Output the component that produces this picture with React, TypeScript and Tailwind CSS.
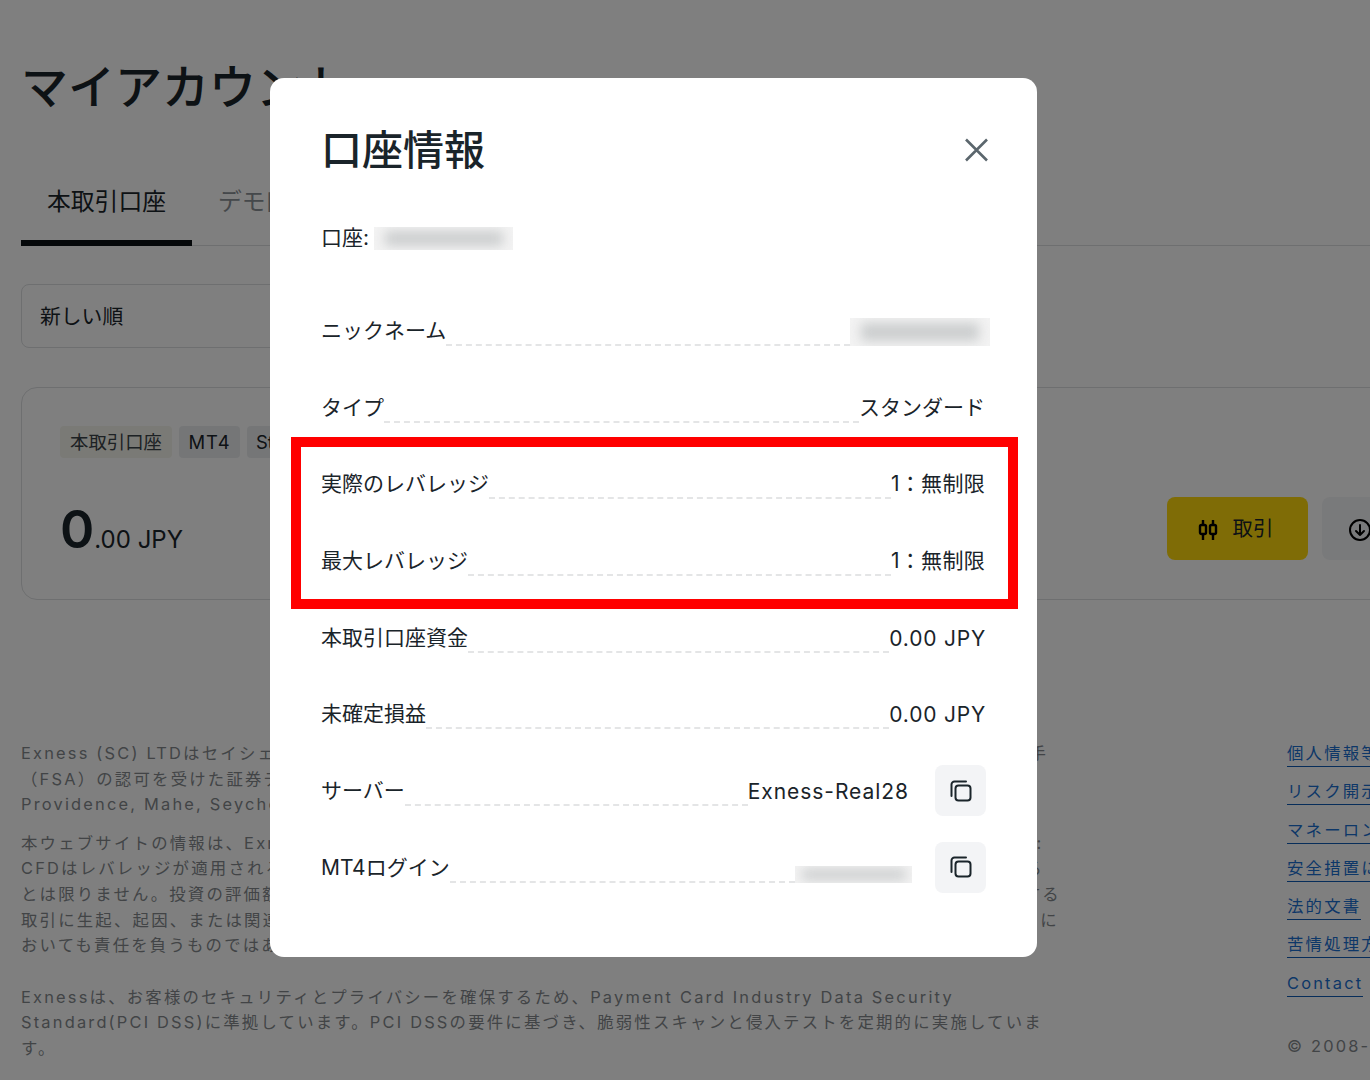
const FF = "font-['Inter','Noto_Sans_CJK_JP',sans-serif]";

function CopyIcon() {
  return (
    <svg width="24" height="24" viewBox="0 0 24 24" fill="none" stroke="#1a242a" strokeWidth="2" strokeLinecap="round" strokeLinejoin="round">
      <rect x="6.5" y="6.5" width="15" height="15" rx="3" />
      <path d="M17 2.5H5.5a3 3 0 0 0-3 3V17" />
    </svg>
  );
}

function Blur({ w, h, bar, extra = "" }: { w: string; h: string; bar: string; extra?: string }) {
  return (
    <div className={`${w} ${h} ${extra} bg-[#f3f3f3] overflow-hidden flex items-center justify-center shrink-0`}>
      <div className={`${bar} bg-[#cbcdce] blur-[6px]`} />
    </div>
  );
}

function Row({ label, value, right, cls = "" }: { label: string; value?: string; right?: React.ReactNode; cls?: string }) {
  return (
    <div className="flex items-start h-[51px]">
      <div className="h-[51px] leading-[51px] text-[21px] shrink-0">{label}</div>
      <div className="flex-1 h-[41px] border-b-2 border-dashed border-[#e4e5e6]" />
      {value && <div className={`h-[51px] leading-[51px] text-[21px] shrink-0 ${cls}`}>{value}</div>}
      {right}
    </div>
  );
}

function CopyButton() {
  return (
    <div className="w-[51px] h-[51px] -mr-px bg-[#f3f4f6] rounded-[8px] flex items-center justify-center shrink-0">
      <CopyIcon />
    </div>
  );
}

const p1 = [
  "Exness (SC) LTDはセイシェル共和国で登録された証券ディーラーで、登録番号は8423606-1、セイシェル証券取引相手",
  "（FSA）の認可を受けた証券ディーラーで、ライセンス番号はSD025です。登記上の事務所はCT House,",
  "Providence, Mahe, Seychellesです。",
];
const p2 = [
  "本ウェブサイトの情報は、Exness (SC) LTDによる一般的な情報提供を目的としたものであり、投資助言ではありません:",
  "CFDはレバレッジが適用されるため、複雑な金融商品であり、取引には高いリスクが伴います。お客様の資金を失いもする",
  "とは限りません。投資の評価額は上下する可能性があり、投資した金額を下回る場合があることをご理解いただくよう要する",
  "取引に生起、起因、または関連する損失や損害について、当社はいかなる場合においても一切の責任を負いませんいかなるに",
  "おいても責任を負うものではありません。",
];
const p3 = [
  "Exnessは、お客様のセキュリティとプライバシーを確保するため、Payment Card Industry Data Security",
  "Standard(PCI DSS)に準拠しています。PCI DSSの要件に基づき、脆弱性スキャンと侵入テストを定期的に実施していま",
  "す。",
];
const links = ["個人情報等の取扱い", "リスク開示に関する", "マネーロンダリング", "安全措置について", "法的文書", "苦情処理方針", "Contact"];

function Lines({ lines, cls }: { lines: string[]; cls: string }) {
  return (
    <div className={cls}>
      {lines.map((l) => (
        <div key={l} className="whitespace-nowrap h-[25.6px] leading-[25.6px]">{l}</div>
      ))}
    </div>
  );
}

export default function App() {
  return (
    <div className={`relative w-[1370px] h-[1080px] overflow-hidden bg-white text-[#1a242a] ${FF}`}>
      <div className="w-[1500px] pl-[21px] pt-[60px]">
        <h1 className="h-[54px] leading-[54px] text-[47px] font-medium">マイアカウント</h1>

        <div className="mt-[66px] h-[66px] flex border-b border-[#dcdee0]">
          <div className="h-[66px] pl-[26px] pr-[26px] pt-[1px] text-[23.8px] leading-[42px] border-b-[6px] border-[#0b1114]">本取引口座</div>
          <div className="h-[66px] px-[26px] pt-[1px] text-[23.8px] leading-[42px] text-[#8b9196]">デモ口座</div>
        </div>

        <div className="mt-[38px] w-[300px] h-[64px] border border-[#dcdee0] rounded-[8px] pl-[18px] pt-[2px] flex items-center text-[20.8px]">新しい順</div>

        <div className="mt-[39px] w-[1418px] h-[213px] border border-[#dcdee0] rounded-[16px] pl-[38px] pr-[40px] pt-[38px]">
          <div className="flex gap-[7px] items-center">
            <div className="h-[32px] w-[112px] pt-[1px] rounded-[4px] bg-[#f5f5ec] flex items-center justify-center text-[18.4px] text-[#3a4248]">本取引口座</div>
            <div className="h-[32px] w-[61px] pt-[1px] rounded-[4px] bg-[#ebedef] flex items-center justify-center text-[18.4px] tracking-[1px]">MT4</div>
            <div className="h-[32px] w-[120px] pt-[1px] rounded-[4px] bg-[#ebedef] flex items-center pl-[9px] text-[18.4px]">Standard</div>
          </div>
          <div className="mt-[39px] h-[63px] flex items-center justify-between">
            <div className="flex items-baseline pt-[2px] leading-none">
              <span className="text-[52px] font-semibold">0</span>
              <span className="text-[24px]">.00 JPY</span>
            </div>
            <div className="flex gap-[14px]">
              <div className="w-[141px] h-[63px] rounded-[8px] bg-[#ffd90c] flex items-center justify-center gap-[14px] pt-[2px] pr-[4px] text-[20.4px]">
                <svg width="21" height="20" viewBox="0 0 21 20" fill="none" stroke="#000" strokeWidth="2.4">
                  <path d="M5 0v4M5 14v6M15 0v4M15 14v6" />
                  <rect x="2" y="5" width="6" height="9" rx="1.5" />
                  <rect x="12" y="5" width="6" height="9" rx="1.5" />
                </svg>
                <span>取引</span>
              </div>
              <div className="w-[76px] h-[63px] pt-[2px] rounded-[8px] bg-[#f3f4f6] flex items-center justify-center">
                <svg width="24" height="24" viewBox="0 0 24 24" fill="none" stroke="#000" strokeWidth="2" strokeLinecap="round" strokeLinejoin="round">
                  <circle cx="12" cy="12" r="10" />
                  <path d="M12 7v10M8 13l4 4 4-4" />
                </svg>
              </div>
            </div>
          </div>
        </div>

        <div className="mt-[141px] flex text-[16.4px] tracking-[2.2px]">
          <div className="w-[1266px] shrink-0 text-[#84898d]">
            <Lines lines={p1} cls="" />
            <Lines lines={p2} cls="mt-[13px]" />
            <Lines lines={p3} cls="mt-[26px]" />
          </div>
          <div className="shrink-0">
            <div className="flex flex-col items-start gap-[12.3px]">
              {links.map((l) => (
                <div key={l} className="h-[26px] leading-[25px] text-[#1a6fd0] border-b border-[#0f5bb5] whitespace-nowrap">{l}</div>
              ))}
            </div>
            <div className="mt-[37px] leading-[25.6px] text-[#84898d] whitespace-nowrap">© 2008-2025 Exness</div>
          </div>
        </div>
      </div>

      {/* dimming layer */}
      <div className="absolute inset-0 bg-black/50" />

      {/* dialog */}
      <div className="absolute left-[270px] top-[78px] w-[767px] h-[879px] bg-white rounded-[14px] pl-[51px] pr-[52px] pt-[44px]">
        <div className="h-[56px] flex items-center justify-between">
          <h2 className="text-[41px] leading-[56px] font-medium">口座情報</h2>
          <svg width="24" height="24" viewBox="0 0 24 24" fill="none" stroke="#5b666d" strokeWidth="2.6" className="-mr-[3px]">
            <path d="M2 1.5l21 21M23 1.5l-21 21" />
          </svg>
        </div>
        <div className="mt-[46px] h-[28px] flex items-center text-[21px]">
          <span>口座:</span>
          <Blur w="w-[139px]" h="h-[23px]" bar="w-[118px] h-[15px]" extra="ml-[5px]" />
        </div>
        <div className="mt-[53px] flex flex-col gap-[25.7px]">
          <Row label="ニックネーム" right={<Blur w="w-[140px]" h="h-[28px]" bar="w-[118px] h-[18px]" extra="mt-[13px] -mr-[5px]" />} />
          <Row label="タイプ" value="スタンダード" />
          <Row label="実際のレバレッジ" value="1：無制限" cls="tracking-[0.3px]" />
          <Row label="最大レバレッジ" value="1：無制限" cls="tracking-[0.3px]" />
          <Row label="本取引口座資金" value="0.00 JPY" cls="pt-[1px] tracking-[0.8px] -mr-[1px]" />
          <Row label="未確定損益" value="0.00 JPY" cls="pt-[1px] tracking-[0.8px] -mr-[1px]" />
          <Row label="サーバー" value="Exness-Real28" cls="pt-[1px] tracking-[0.95px] mr-[26px]" right={<CopyButton />} />
          <Row label="MT4ログイン" right={<><Blur w="w-[117px]" h="h-[17px]" bar="w-[104px] h-[11px]" extra="mt-[24px] mr-[23px]" /><CopyButton /></>} />
        </div>
      </div>

      {/* annotation */}
      <div className="absolute left-[291px] top-[437px] w-[727px] h-[172px] border-[10px] border-[#ff0000]" />
    </div>
  );
}
